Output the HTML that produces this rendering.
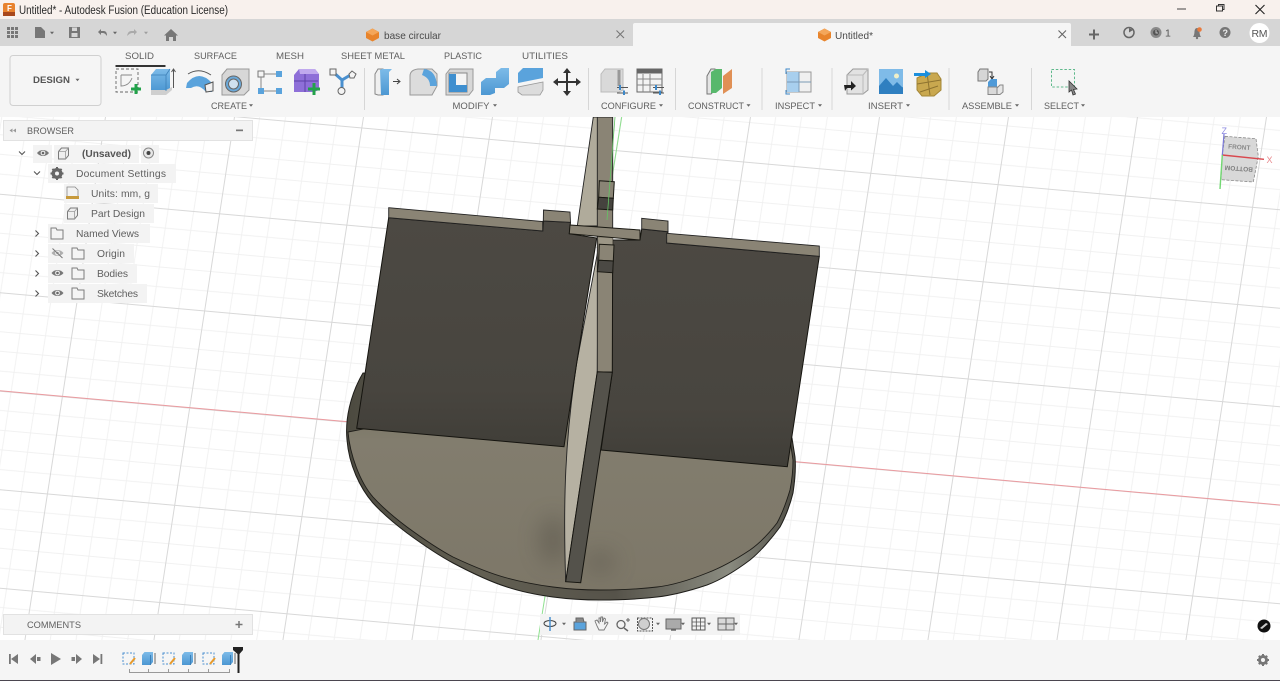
<!DOCTYPE html>
<html><head><meta charset="utf-8"><title>Untitled* - Autodesk Fusion</title>
<style>
html,body{margin:0;padding:0;width:1280px;height:681px;overflow:hidden;background:#fff}
svg{display:block;position:absolute;left:0;top:0;filter:blur(.3px)}
text{font-family:"Liberation Sans",sans-serif;white-space:pre}
.rb{font-size:9.5px;fill:#606060}
.tr{font-size:10.3px;fill:#5f5f5f}
</style></head><body>
<svg width="1280" height="681" viewBox="0 0 1280 681" xmlns="http://www.w3.org/2000/svg">
<defs>
<pattern id="grid" patternUnits="userSpaceOnUse" width="129" height="98.5" patternTransform="matrix(.98647 .08789 -.15191 .98647 571 441.6)">
<g stroke="#f0f0f0" stroke-width=".9" fill="none">
<path d="M25.8 0V98.5M51.6 0V98.5M77.4 0V98.5M103.2 0V98.5M0 19.7H129M0 39.4H129M0 59.1H129M0 78.8H129"/>
</g>
<g stroke="#d8d8d8" stroke-width="1" fill="none"><path d="M.5 0V98.5M0 .5H129"/></g>
</pattern>
<linearGradient id="rim" x1="0" x2="1" y1="0" y2="0"><stop offset="0" stop-color="#4c4a40"/><stop offset=".3" stop-color="#625f52"/><stop offset=".6" stop-color="#56534a"/><stop offset=".85" stop-color="#8a8b80"/><stop offset="1" stop-color="#4f4d44"/></linearGradient>
<linearGradient id="top" x1="0" x2="0" y1="0" y2="1"><stop offset="0" stop-color="#75715f"/><stop offset=".25" stop-color="#827d6e"/><stop offset="1" stop-color="#7d7768"/></linearGradient>
<linearGradient id="pl" x1="0" x2="0" y1="0" y2="1"><stop offset="0" stop-color="#4c4943"/><stop offset=".75" stop-color="#48453f"/><stop offset="1" stop-color="#403e38"/></linearGradient>
<linearGradient id="blue" x1="0" x2="0" y1="0" y2="1"><stop offset="0" stop-color="#7dbbe8"/><stop offset="1" stop-color="#4c97d2"/></linearGradient>
<filter id="b6" x="-80%" y="-80%" width="260%" height="260%"><feGaussianBlur stdDeviation="11"/></filter>
<g id="eye"><path d="M-6 0C-3-4 3-4 6 0C3 4-3 4-6 0Z" fill="#777"/><circle r="2.4" fill="#eee"/><circle r="1.3" fill="#666"/></g>
<path id="fold" d="M-6-5.500H-1L0-3.500H6V5.500H-6Z" fill="#f4f4f4" stroke="#7d7d7d" stroke-width="1"/>
<g id="comp"><path d="M-5-2L-2-5.500H5V2L2 5.500H-5Z" fill="#eee" stroke="#7b7b7b"/><path d="M-5-2H2V5.500M2-2L5-5.500" fill="none" stroke="#9a9a9a" stroke-width=".8"/></g>
<path id="dn" d="M-2-1.200H2L0 1.200Z" fill="#666"/>
<path id="sk" d="M1 1H12V12H1Z" fill="none" stroke="#4a90cf" stroke-width="1" stroke-dasharray="2 1.500"/>
<g id="tlb"><path d="M0 3L2.500 0H11V10L8.500 13H0Z" fill="url(#blue)"/><path d="M8.500 3V13" stroke="#3d80b8"/><path d="M13 1V12" stroke="#666"/></g>
</defs>

<!-- canvas -->
<rect x="0" y="117" width="1280" height="523" fill="#fff"/>
<rect x="0" y="117" width="1280" height="523" fill="url(#grid)"/>
<path d="M0 390.700L1280 505" stroke="#eb9a9f" stroke-width="1"/>
<path d="M621.700 117L538 640" stroke="#8fe08f" stroke-width="1"/>

<!-- model -->
<g>
<path d="M363 373C350 395 345 420 347 440C349 465 360 488 373 503C383 514 395 524 407 533C422 544 438 555 453 563C470 572 488 581 507 587C522 592 538 595 553 597C568 599 585 600 600 600C620 600 640 599 657 597C675 595 692 590 707 585C723 579 738 569 750 560C760 552 772 538 780 527C786 516 790 505 793 493C795 480 796 468 795 457L792 438L500 380Z" fill="url(#rim)" stroke="#1e1d19"/>
<path d="M348 432C350 455 360 482 373 497C383 508 395 518 407 527C422 538 438 549 453 557C470 565 488 573 507 578C522 582 538 585 553 587C568 589 585 590 600 590C620 590 640 589 657 587C675 585 692 579 707 573C723 567 738 558 750 550C760 543 770 532 777 523C783 512 787 500 790 490C792 480 793 470 793 460L790 440L560 390Z" fill="url(#top)" stroke="#1e1d19" stroke-width=".9"/>
<ellipse cx="553" cy="540" rx="14" ry="24" fill="#4f4c42" opacity=".42" filter="url(#b6)"/>
<ellipse cx="600" cy="562" rx="16" ry="12" fill="#4f4c42" opacity=".35" filter="url(#b6)"/>
<path d="M593.300 117H598V226H577.300Z" fill="#b0ab9b" stroke="#222" stroke-width=".9"/>
<path d="M598 250L597.300 372L565.700 582C563 500 565 440 576.700 363Z" fill="#b6b1a2" stroke="#222" stroke-width=".9"/>
<path d="M597.300 117H612.700V372H597.300Z" fill="#8a8475" stroke="#222" stroke-width=".9"/>
<path d="M388.700 217.700L542.700 231L543.300 221L570.500 222.300L569.300 233.700L596.700 238L576.700 363L564 446.700L356.700 428.300Z" fill="url(#pl)" stroke="#15140f"/>
<path d="M612.700 240H640L641.700 229L668 231.700L666.700 243L819.300 256.300L787.300 466.700L601 450L612.300 372Z" fill="url(#pl)" stroke="#15140f"/>
<path d="M597.300 371.700L612.300 372.300L580.700 582.700L565.700 581.700Z" fill="#54524b" stroke="#15140f"/>
<path d="M388.700 207.700L542.700 221.500L542.700 231L388.700 217.700Z" fill="#8a8475" stroke="#222" stroke-width=".9"/>
<path d="M543.500 210L570 212L570.500 222.300L543.300 221Z" fill="#8a8475" stroke="#222" stroke-width=".9"/>
<path d="M666.700 233.300L819.300 246L819.300 256.300L666.700 243Z" fill="#8a8475" stroke="#222" stroke-width=".9"/>
<path d="M641.700 218.300L668 221L668 231.700L641.700 229Z" fill="#8a8475" stroke="#222" stroke-width=".9"/>
<path d="M570 225L640 230L640 240L569.300 233.700Z" fill="#8a8475" stroke="#191812"/>
<path d="M599.300 180.700L614.300 181.700L613.300 198.300L598.700 197.300Z" fill="#8a8475" stroke="#191812"/>
<path d="M598.700 197.300L613.300 198.300L612.700 210L597.300 209Z" fill="#45433e" stroke="#191812"/>
<path d="M598 238H612.700V245L599.300 244.300Z" fill="#9c9686"/>
<path d="M599.300 244.300L614 245L613.300 261L598.700 260.300Z" fill="#8a8475" stroke="#191812"/>
<path d="M598.700 260.300L613.300 261L612.700 272.700L597.300 271.700Z" fill="#4b4944" stroke="#191812"/>
<path d="M615 117L607 220" stroke="#63c463" stroke-width=".8" fill="none"/>
</g>

<!-- top chrome -->
<rect width="1280" height="19" fill="#f8f1ed"/>
<rect y="19" width="1280" height="27" fill="#d6d6d6"/>
<path d="M633 46V25Q633 23 635 23H1069Q1071 23 1071 25V46Z" fill="#f5f5f5"/>
<rect y="46" width="1280" height="71" fill="#f5f5f5"/>
<!-- app icon -->
<rect x="3" y="3" width="12" height="13" rx="2" fill="#e8822e"/><rect x="3" y="12" width="12" height="4" fill="#a8481c"/>
<text x="7" y="11" style="font-size:8px;font-weight:700" fill="#fff">F</text>
<text x="19" y="14" style="font-size:11.500px" fill="#2a2a2a" textLength="209" lengthAdjust="spacingAndGlyphs">Untitled* - Autodesk Fusion (Education License)</text>
<!-- window controls -->
<path d="M1177 9H1186" stroke="#444" stroke-width="1"/>
<path d="M1216.500 11H1222.500V6H1216.500ZM1218.500 6V4.500H1224V9.500H1222.500" fill="none" stroke="#333" stroke-width="1"/>
<path d="M1255.500 5L1264.500 14M1264.500 5L1255.500 14" stroke="#222" stroke-width="1.100"/>

<!-- qat -->
<g fill="#777"><rect x="7" y="27" width="3" height="3"/><rect x="11" y="27" width="3" height="3"/><rect x="15" y="27" width="3" height="3"/><rect x="7" y="31" width="3" height="3"/><rect x="11" y="31" width="3" height="3"/><rect x="15" y="31" width="3" height="3"/><rect x="7" y="35" width="3" height="3"/><rect x="11" y="35" width="3" height="3"/><rect x="15" y="35" width="3" height="3"/></g>
<path d="M35 27H41L45 31V38H35Z" fill="#777"/><use href="#dn" x="52" y="33"/>
<path d="M69 27H80V38H69Z" fill="#777"/><rect x="72" y="27.500" width="5" height="3.500" fill="#d6d6d6"/><rect x="71.500" y="33" width="6" height="4" fill="#d6d6d6"/>
<path d="M98 32L101 29V31H104Q107 31 107 36Q105 33 103 33H101V35Z" fill="#777"/><use href="#dn" x="115" y="33"/>
<path d="M137 32L134 29V31H131Q128 31 127 36Q130 33 132 33H134V35Z" fill="#aaa"/><use href="#dn" x="146" y="33" opacity=".5"/>
<path d="M171 29L178 35.500H176V41H173V37H169V41H166V35.500H164Z" fill="#777"/>

<!-- tabs -->
<path d="M372.500 28.500L379 32V38L372.500 41.500L366 38V32Z" fill="#e8842c"/><path d="M366 32L372.500 35.500L379 32L372.500 28.500Z" fill="#f4a65a"/>
<text x="384" y="39" style="font-size:10.500px" fill="#4a4a4a" textLength="57" lengthAdjust="spacingAndGlyphs">base circular</text>
<path d="M616.500 30.500L624 38M624 30.500L616.500 38" stroke="#777" stroke-width="1.100"/>
<path d="M824.500 28.500L831 32V38L824.500 41.500L818 38V32Z" fill="#e8842c"/><path d="M818 32L824.500 35.500L831 32L824.500 28.500Z" fill="#f4a65a"/>
<text x="835" y="39" style="font-size:10.500px" fill="#4a4a4a" textLength="38" lengthAdjust="spacingAndGlyphs">Untitled*</text>
<path d="M1058.500 30.500L1066 38M1066 30.500L1058.500 38" stroke="#666" stroke-width="1.100"/>
<path d="M1089 34.500H1099M1094 29.500V39.500" stroke="#666" stroke-width="2"/>
<circle cx="1129" cy="32.500" r="5" fill="none" stroke="#666" stroke-width="1.500"/><path d="M1129 32.500V28L1133 30Z" fill="#666"/>
<circle cx="1156" cy="32.500" r="5.500" fill="#8a8a8a"/><circle cx="1156" cy="32.500" r="3" fill="#555"/><path d="M1156 30V33H1158" stroke="#ddd" fill="none" stroke-width=".8"/>
<text x="1165" y="36.500" style="font-size:10.500px" fill="#555">1</text>
<path d="M1193 37Q1194.500 35 1194.500 31Q1195 28 1197 28Q1199 28 1199.500 31Q1199.500 35 1201 37Z" fill="#777"/><circle cx="1197" cy="38" r="1.200" fill="#777"/><circle cx="1199.500" cy="29.500" r="2.300" fill="#ea7a3c"/>
<circle cx="1225" cy="32.500" r="5.500" fill="#777"/><text x="1222.500" y="36" style="font-size:9px;font-weight:700" fill="#eee">?</text>
<circle cx="1259.500" cy="33" r="10" fill="#fff"/><text x="1251.500" y="37" style="font-size:10.500px" fill="#555" textLength="16">RM</text>

<!-- ribbon tabs -->
<text class="rb" x="125" y="59" textLength="29" lengthAdjust="spacingAndGlyphs">SOLID</text>
<text class="rb" x="194" y="59" textLength="43" lengthAdjust="spacingAndGlyphs">SURFACE</text>
<text class="rb" x="276" y="59" textLength="28" lengthAdjust="spacingAndGlyphs">MESH</text>
<text class="rb" x="341" y="59" textLength="64" lengthAdjust="spacingAndGlyphs">SHEET METAL</text>
<text class="rb" x="444" y="59" textLength="38" lengthAdjust="spacingAndGlyphs">PLASTIC</text>
<text class="rb" x="522" y="59" textLength="46" lengthAdjust="spacingAndGlyphs">UTILITIES</text>
<text class="rb" x="211" y="109" textLength="36" lengthAdjust="spacingAndGlyphs">CREATE</text><use href="#dn" x="251" y="105.500"/>
<text class="rb" x="452.500" y="109" textLength="37" lengthAdjust="spacingAndGlyphs">MODIFY</text><use href="#dn" x="495" y="105.500"/>
<text class="rb" x="601" y="109" textLength="55" lengthAdjust="spacingAndGlyphs">CONFIGURE</text><use href="#dn" x="661" y="105.500"/>
<text class="rb" x="688" y="109" textLength="56" lengthAdjust="spacingAndGlyphs">CONSTRUCT</text><use href="#dn" x="748.500" y="105.500"/>
<text class="rb" x="775" y="109" textLength="40" lengthAdjust="spacingAndGlyphs">INSPECT</text><use href="#dn" x="820" y="105.500"/>
<text class="rb" x="868" y="109" textLength="35" lengthAdjust="spacingAndGlyphs">INSERT</text><use href="#dn" x="908" y="105.500"/>
<text class="rb" x="962" y="109" textLength="50" lengthAdjust="spacingAndGlyphs">ASSEMBLE</text><use href="#dn" x="1017" y="105.500"/>
<text class="rb" x="1044" y="109" textLength="35" lengthAdjust="spacingAndGlyphs">SELECT</text><use href="#dn" x="1083" y="105.500"/>
<rect x="115.500" y="65" width="50" height="2" fill="#333"/>
<rect x="10" y="55.500" width="91" height="50" rx="3" fill="#f5f5f5" stroke="#d0d0d0" stroke-width="1"/>
<text x="33" y="83" style="font-size:9.500px;font-weight:700" fill="#555" textLength="37" lengthAdjust="spacingAndGlyphs">DESIGN</text><use href="#dn" x="77.500" y="80"/>
<!-- separators -->
<path d="M364.500 68V110M588.500 68V110M675.500 68V110M762 68V110M832 68V110M949 68V110M1031.500 68V110" stroke="#d6d6d6"/>

<!-- CREATE icons -->
<path d="M116 69H138V92H116Z" fill="#f5f5f5" stroke="#666" stroke-width=".9" stroke-dasharray="3 2"/><path d="M121 75H132M121 75V86Q129 86 132 78" fill="none" stroke="#888" stroke-width=".9"/>
<path d="M131 89H141M136 84V94" stroke="#22a24a" stroke-width="3"/>
<path d="M151 75L156 69H170V90L166 91H151Z" fill="url(#blue)"/><path d="M151 90H166L172 87V90L166 95H151Z" fill="#cfcfcf"/><path d="M166 75V91M151 75H166L170 69" stroke="#3d80b8" fill="none" stroke-width=".8"/><path d="M173.500 88V70M171.500 72L173.500 69L175.500 72" stroke="#555" fill="none"/>
<path d="M187 83Q199 69 212 83L212 92H206Q199 83 191 88H186Z" fill="#5aa3dc"/><path d="M205 85L213 82V91L206 92Z" fill="#f0f0f0" stroke="#555"/><path d="M188 74Q199 67 211 75" stroke="#555" fill="none"/>
<path d="M222 75L227 69H249V90L244 95H222Z" fill="#d7d7d7" stroke="#999"/><circle cx="233.500" cy="84" r="8" fill="#6aa8d8" stroke="#666"/><circle cx="233.500" cy="84" r="5" fill="#cfe0ee" stroke="#666"/>
<rect x="258" y="71" width="6" height="6" fill="#f4f4f4" stroke="#777"/><rect x="276" y="71" width="6" height="6" fill="#5aa3dc"/><rect x="258" y="88" width="6" height="6" fill="#5aa3dc"/><rect x="276" y="88" width="6" height="6" fill="#5aa3dc"/><path d="M264 74H276M261 77V88M264 91H276" stroke="#888"/>
<path d="M294 75L299 69H315L319 74V90L314 92H294Z" fill="#8e6fd8"/><path d="M294 81H318M305 70V92" stroke="#5e42a8"/><path d="M299 69H315L319 74H300Z" fill="#c0a9ee"/>
<path d="M308 89H320M314 83V95" stroke="#22a24a" stroke-width="3"/>
<path d="M333 72L342 80L352 74M342 80V90" stroke="#4a90cf" stroke-width="3" fill="none"/><rect x="330" y="69" width="6" height="6" fill="#f4f4f4" stroke="#666"/><path d="M352 71L356 74L354 78H350L349 74Z" fill="#f4f4f4" stroke="#666"/><circle cx="341.500" cy="91" r="3.500" fill="#f4f4f4" stroke="#666"/>

<!-- MODIFY icons -->
<path d="M375 74L378 69H383V95H378L375 94Z" fill="#efefef" stroke="#888"/><path d="M380 70L382 69H392L389 72V95H381Z" fill="url(#blue)"/><path d="M393 81.500H399M397 79L400 81.500L397 84" stroke="#444" fill="none"/>
<path d="M410 94V76Q410 70 418 69H432L437 74V86L432 95H410Z" fill="#dcdcdc" stroke="#999"/><path d="M424 69Q436 70 437 86L430 86Q430 78 422 75Z" fill="#5aa3dc"/>
<path d="M446 74L450 69H473V90L469 95H446Z" fill="#d7d7d7" stroke="#999"/><rect x="449" y="73" width="18" height="19" fill="#f4f4f4" stroke="#888"/><path d="M449 92V74H456V85H467V92Z" fill="#3f8fcf"/>
<path d="M481 82L486 78H496V72L501 68H509V84L504 88H495V93L490 95H481Z" fill="url(#blue)"/>
<path d="M518 73L523 68H543V78L518 83Z" fill="#5aa3dc"/><path d="M518 87V92L522 95H540L543 90V82Z" fill="#dcdcdc" stroke="#999" stroke-width=".8"/>
<path d="M567 70V94M555 82H579" stroke="#333" stroke-width="2"/><path d="M567 68L571 73H563ZM567 96L571 91H563ZM553 82L558 78V86ZM581 82L576 78V86Z" fill="#333"/>

<!-- CONFIGURE icons -->
<path d="M601 74L605 69H623V90L619 92H601Z" fill="#d9d9d9" stroke="#bbb"/><path d="M619 70V86" stroke="#999" stroke-width="3"/>
<path d="M617 87.500H628M617 93H628" stroke="#555"/><path d="M620 85V90M624 90.500V95" stroke="#3d88c8" stroke-width="2"/>
<rect x="637" y="69" width="25" height="23" fill="#f3f3f3" stroke="#666"/><rect x="637" y="69" width="25" height="4.500" fill="#666"/><path d="M643 74V92M650 74V92M637 79H662M637 85H662" stroke="#888"/>
<path d="M653 87.500H664M653 93H664" stroke="#555"/><path d="M656 85V90M660 90.500V95" stroke="#3d88c8" stroke-width="2"/>
<!-- CONSTRUCT -->
<path d="M707 76L711 69H715V90L711 94H707Z" fill="#e4e4e4" stroke="#777"/><path d="M711 72L716 69H722V88L716 93H711Z" fill="#58b86c"/><path d="M723 76L732 69V88L723 94Z" fill="#e09055"/>
<!-- INSPECT -->
<path d="M787 72H811V92H787Z" fill="#f0f0f0" stroke="#999"/><path d="M787 72H799V92H787Z" fill="#a8cfee"/><path d="M787 82H811M799 72V92" stroke="#7a9ab5"/>
<path d="M790 69H786V74M786 90V94H790" stroke="#3d88c8" fill="none"/>
<!-- INSERT -->
<path d="M847 75L853 69H868V90L863 94H847Z" fill="#e2e2e2" stroke="#999"/><path d="M847 75H863V94M863 75L868 69" stroke="#bbb" fill="none"/><path d="M844 85H851V81L856 86L851 90.500V88H847L845 91Z" fill="#222"/>
<rect x="879" y="69" width="24" height="25" fill="#4a9ad8"/><rect x="879" y="69" width="24" height="18" fill="#7fbbe8"/><path d="M879 94V86L886 78L893 86L897 82L903 88V94Z" fill="#2f7fc0"/><circle cx="896.500" cy="76" r="2.500" fill="#f0efc8"/>
<path d="M917 78L927 73H937L941 79V90L934 96H922L917 90Z" fill="#c9a84f" stroke="#a48636"/><path d="M917 84L941 80M920 92L938 86M927 73L930 95" stroke="#8f7430" fill="none"/>
<path d="M914 73H925V70L931 74L925 78V76H914Z" fill="#1b8fdc"/>
<!-- ASSEMBLE -->
<path d="M978 72L980 69H988V79L986 81H978Z" fill="#d6d6d6" stroke="#777"/><path d="M989 72H992V78M990 76L992 79L994 76" stroke="#333" fill="none"/>
<path d="M988 82L991 79H997V88H988Z" fill="#4f9ad8"/><rect x="988" y="87" width="9" height="7.500" fill="#d9d9d9" stroke="#888"/><path d="M997 88L1000 85H1003V92L1000 94.500H997Z" fill="#e6e6e6" stroke="#888"/>
<!-- SELECT -->
<rect x="1051.500" y="69.500" width="23" height="17.500" fill="none" stroke="#5fb98c" stroke-width="1" stroke-dasharray="2.500 1.800"/>
<path d="M1069 81V92L1071.500 90L1073 95L1075.500 94L1073.500 89.500L1077 89Z" fill="#888" stroke="#333" stroke-width=".8"/>

<!-- view cube -->
<g>
<path d="M1225 136.300L1256 138.700L1258.300 156.300L1253.300 182L1221 179.700L1222.300 154.300Z" fill="#d8d8d8" stroke="#8a8a8a" stroke-width=".8" stroke-dasharray="3 1.500"/>
<text transform="translate(1228 148.500) rotate(4)" style="font-size:6.500px;font-weight:700" fill="#8a8a8a">FRONT</text>
<text transform="translate(1253 167.500) rotate(184)" style="font-size:6.500px;font-weight:700" fill="#7e7e7e">BOTTOM</text>
<path d="M1222.300 155L1264 159.300" stroke="#d9484e" stroke-width="1.400"/>
<path d="M1222.300 155L1224 134" stroke="#7a78d8" stroke-width="1.200"/>
<path d="M1222.300 155L1220 189" stroke="#72d872" stroke-width="1.400"/>
<text x="1266.500" y="163" style="font-size:9px" fill="#e88a8e">X</text>
<text x="1221.500" y="134" style="font-size:9px" fill="#8d8be0">Z</text>
</g>

<!-- browser -->
<rect x="3.500" y="120.500" width="249" height="20" fill="#f3f3f3" stroke="#e2e2e2"/>
<path d="M12.500 128.500L9.500 130.500L12.500 132.500ZM16 128.500L13 130.500L16 132.500Z" fill="#999"/>
<text x="27" y="134" class="rb" textLength="47" lengthAdjust="spacingAndGlyphs">BROWSER</text>
<rect x="236" y="129.500" width="7" height="1.700" fill="#777"/>

<g fill="#f3f3f3">
<rect x="33" y="145" width="19" height="18"/><rect x="54" y="145" width="85" height="18"/><rect x="141" y="145" width="18" height="18"/>
<rect x="48" y="164" width="128" height="19"/><rect x="64" y="184" width="94" height="19"/><rect x="64" y="204" width="90" height="19"/><rect x="48" y="224" width="102" height="19"/><rect x="48" y="244" width="86" height="19"/><rect x="48" y="264" width="89" height="19"/><rect x="48" y="284" width="99" height="19"/>
</g>
<path d="M19 151.500L22 154.500L25 151.500M34 171.500L37 174.500L40 171.500" fill="none" stroke="#555" stroke-width="1.100"/>
<path d="M35.500 230.500L38.500 233.500L35.500 236.500M35.500 250.500L38.500 253.500L35.500 256.500M35.500 270.500L38.500 273.500L35.500 276.500M35.500 290.500L38.500 293.500L35.500 296.500" fill="none" stroke="#555" stroke-width="1.100"/>
<use href="#eye" x="43" y="153"/>
<use href="#comp" x="63.500" y="153.500"/>
<text x="82" y="157" style="font-size:10.300px;font-weight:700" fill="#555" textLength="49" lengthAdjust="spacingAndGlyphs">(Unsaved)</text>
<circle cx="148.500" cy="153" r="5" fill="#e8e8e8" stroke="#888"/><circle cx="148.500" cy="153" r="2" fill="#444"/>
<circle cx="57" cy="173.500" r="4.200" fill="none" stroke="#666" stroke-width="2.600"/><path d="M57 167V180M50.500 173.500H63.500M52.400 168.900L61.600 178.100M61.600 168.900L52.400 178.100" stroke="#666" stroke-width="2"/><circle cx="57" cy="173.500" r="2" fill="#f3f3f3"/>
<text x="76" y="177" class="tr" textLength="90">Document Settings</text>
<path d="M67 187H75L78 190V197H67Z" fill="#f2f2f2" stroke="#888" stroke-width=".8"/><rect x="66" y="196" width="13" height="3" fill="#c79a3c"/>
<text x="91" y="197" class="tr" textLength="59">Units: mm, g</text>
<use href="#comp" x="72.500" y="213.500"/>
<text x="91" y="217" class="tr" textLength="54">Part Design</text>
<use href="#fold" x="57" y="233.500"/>
<text x="76" y="237" class="tr" textLength="63">Named Views</text>
<g opacity=".55"><use href="#eye" x="57.500" y="253"/></g><path d="M52.500 248.500L62.500 258" stroke="#777"/>
<use href="#fold" x="78" y="253.500"/>
<text x="97" y="257" class="tr" textLength="28">Origin</text>
<use href="#eye" x="57.500" y="273"/><use href="#fold" x="78" y="273.500"/>
<text x="97" y="277" class="tr" textLength="31">Bodies</text>
<use href="#eye" x="57.500" y="293"/><use href="#fold" x="78" y="293.500"/>
<text x="97" y="297" class="tr" textLength="41">Sketches</text>

<!-- comments -->
<rect x="3.500" y="614.500" width="249" height="20" fill="#f3f3f3" stroke="#e2e2e2"/>
<text x="27" y="628" class="rb" textLength="54" lengthAdjust="spacingAndGlyphs">COMMENTS</text>
<path d="M235.500 624.500H242.500M239 621V628" stroke="#777" stroke-width="1.500"/>

<!-- nav bar -->
<rect x="540" y="614" width="200" height="21" fill="#f3f3f3"/>
<ellipse cx="550" cy="623.500" rx="6" ry="3" fill="none" stroke="#444"/><path d="M550 617V631" stroke="#4a90cf" stroke-width="1.500"/>
<use href="#dn" x="564" y="624"/>
<path d="M574 622H586V630H574Z" fill="#5aa3dc" stroke="#666"/><path d="M576 622V618H583L584 622" fill="#888" stroke="#666"/>
<path d="M597 626L595 621L597 620L599 623V618L600.500 618V622L601 617L602.500 617V622L604 618L605.500 619L604.500 624L607 622L608 623L604 630H599Z" fill="#f3f3f3" stroke="#777" stroke-width=".9"/>
<circle cx="621" cy="624.500" r="4" fill="none" stroke="#666" stroke-width="1.300"/><path d="M624 628L628 631" stroke="#666" stroke-width="1.500"/><path d="M628 618V622M626 620H630" stroke="#666"/>
<rect x="637.500" y="618" width="15" height="13" fill="none" stroke="#555" stroke-dasharray="2 1"/><circle cx="644" cy="624" r="5.500" fill="#cfcfcf" stroke="#777"/>
<use href="#dn" x="658" y="624"/>
<rect x="666" y="619" width="15" height="10" fill="#aaa" stroke="#666"/><path d="M671 630H676" stroke="#666" stroke-width="1.500"/><use href="#dn" x="683" y="624"/>
<rect x="692" y="618" width="13" height="12" fill="#f3f3f3" stroke="#555"/><path d="M696.300 618V630M700.600 618V630M692 622H705M692 626H705" stroke="#555" stroke-width=".8"/>
<use href="#dn" x="709" y="624"/>
<rect x="718" y="618" width="16" height="12" fill="#d9d9d9" stroke="#666"/><path d="M726 618V630M718 624H734" stroke="#666"/>
<use href="#dn" x="736" y="624"/>
<!-- badge -->
<circle cx="1264" cy="626" r="6.500" fill="#111"/><path d="M1260 628L1266 623L1268 624L1262 629Z" fill="#ccc"/>

<!-- timeline -->
<rect y="640" width="1280" height="40" fill="#f5f5f5"/>
<rect y="680" width="1280" height="1" fill="#4b4650"/>
<g fill="#777">
<rect x="9" y="654" width="1.800" height="10"/><path d="M18 654V664L11 659Z"/>
<path d="M30 659L36 654V664Z"/><rect x="37" y="657" width="3.500" height="4"/>
<path d="M51 653L61 659L51 665Z"/>
<rect x="71.500" y="657" width="3.500" height="4"/><path d="M76 654V664L82 659Z"/>
<rect x="100.500" y="654" width="1.800" height="10"/><path d="M93 654V664L100 659Z"/>
</g>
<use href="#sk" x="122" y="652"/><path d="M130 664L135 658" stroke="#e89a2a" stroke-width="2"/>
<use href="#tlb" x="142" y="652"/>
<use href="#sk" x="162" y="652"/><path d="M170 664L175 658" stroke="#e89a2a" stroke-width="2"/>
<use href="#tlb" x="182" y="652"/>
<use href="#sk" x="202" y="652"/><path d="M210 664L215 658" stroke="#e89a2a" stroke-width="2"/>
<use href="#tlb" x="222" y="652"/>
<path d="M129.500 669V672.500H229.500V669M148.500 669V672M168.500 669V672M188.500 669V672M208.500 669V672" fill="none" stroke="#999"/>
<path d="M233 647H243V650L239.500 654V673H237.500V654L233 650Z" fill="#222"/>
<!-- gear -->
<circle cx="1263" cy="660" r="3.700" fill="none" stroke="#777" stroke-width="2.600"/><path d="M1263 654V666M1257 660H1269M1258.800 655.800L1267.200 664.200M1267.200 655.800L1258.800 664.200" stroke="#777" stroke-width="2"/><circle cx="1263" cy="660" r="2" fill="#f5f5f5"/>
</svg>
</body></html>
